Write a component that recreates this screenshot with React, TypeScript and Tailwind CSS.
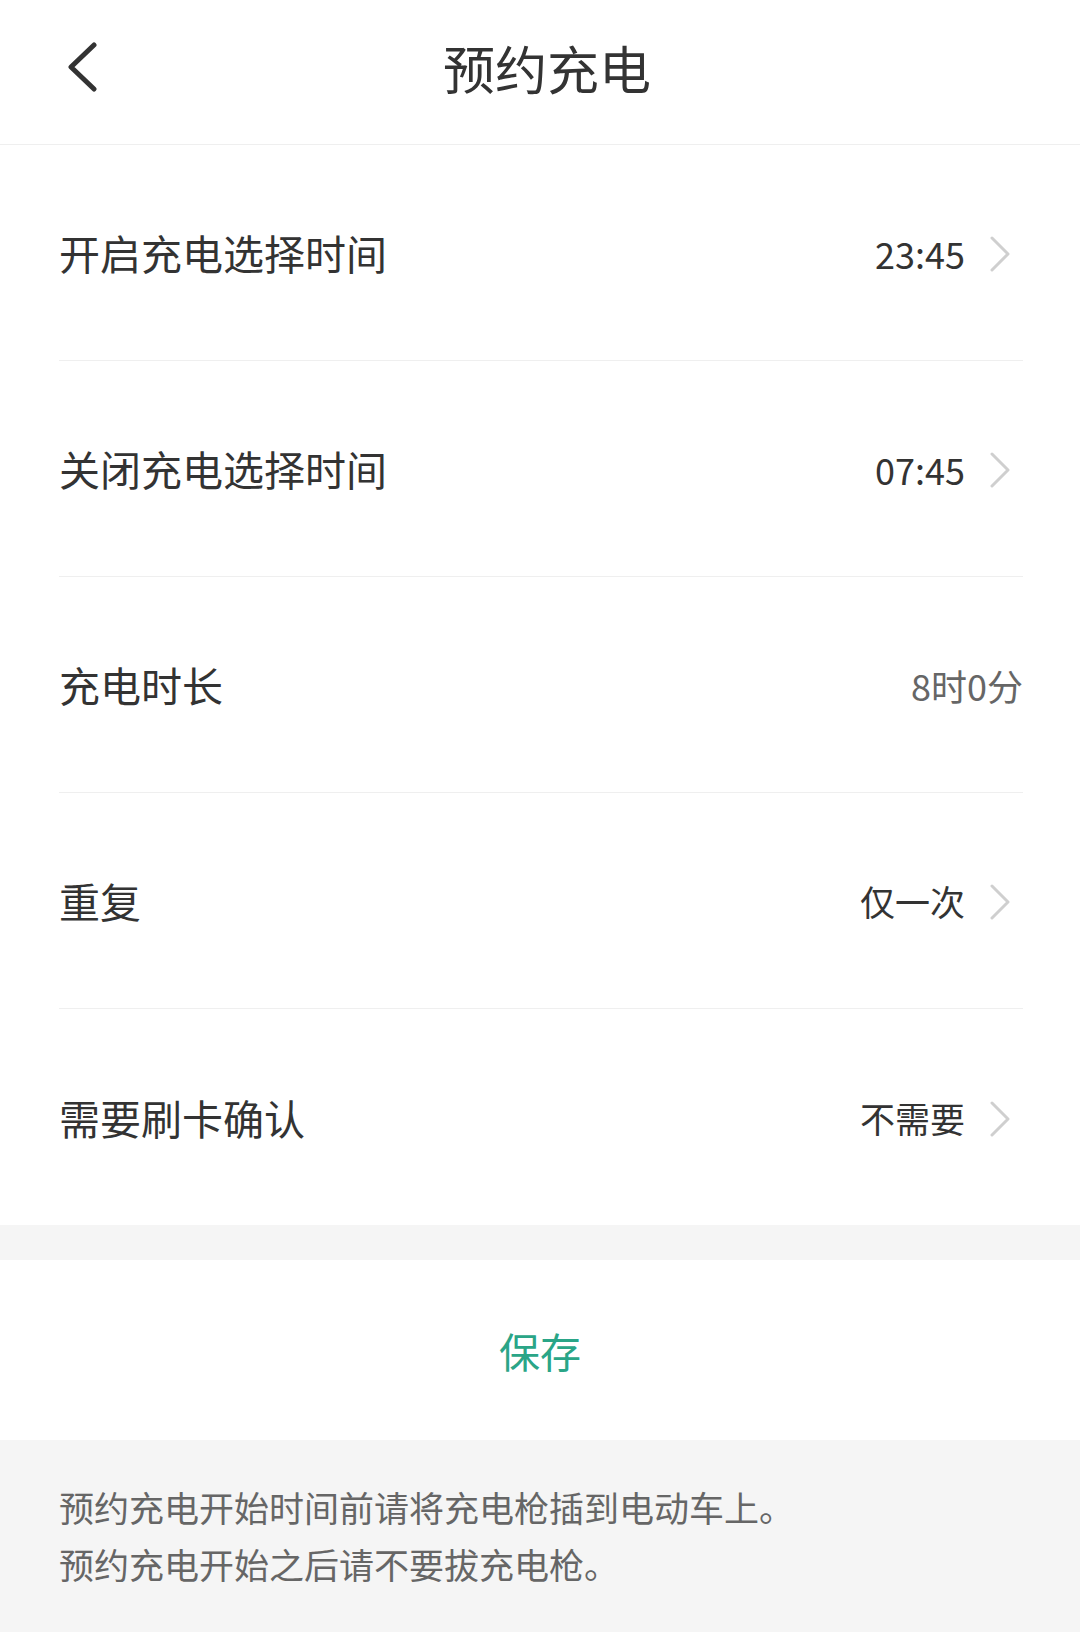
import React from "react";

const font = { fontFamily: '"Noto Sans CJK SC", "Noto Sans", sans-serif' };

function Chevron() {
  return (
    <svg width="20" height="36" viewBox="0 0 20 36" className="ml-[25px] mr-[13px] mt-[3px] shrink-0">
      <path d="M2 2 L18 18 L2 34" fill="none" stroke="#cfcfcf" strokeWidth="3" strokeLinecap="round" strokeLinejoin="round" />
    </svg>
  );
}

type Row = { label: string; value: string; arrow: boolean; muted?: boolean; cjk?: boolean };

const rows: Row[] = [
  { label: "开启充电选择时间", value: "23:45", arrow: true },
  { label: "关闭充电选择时间", value: "07:45", arrow: true },
  { label: "充电时长", value: "8时0分", arrow: false, muted: true },
  { label: "重复", value: "仅一次", arrow: true, cjk: true },
  { label: "需要刷卡确认", value: "不需要", arrow: true, cjk: true },
];

export default function App() {
  return (
    <div className="w-[1080px] h-[1632px] bg-white flex flex-col overflow-hidden" style={font}>
      {/* header */}
      <div className="h-[145px] shrink-0 grid grid-cols-[1fr_auto_1fr] items-center pb-[8px] border-b border-[#efefef]">
        <div className="pl-[66px] flex items-center">
          <svg width="34" height="52" viewBox="0 0 34 52">
            <path d="M28 3 L5 25 L28 47" fill="none" stroke="#333333" strokeWidth="5" strokeLinecap="round" strokeLinejoin="round" />
          </svg>
        </div>
        <div className="text-[52px] leading-none text-[#333333] pl-[14px]">预约充电</div>
        <div />
      </div>

      {/* rows */}
      <div className="pl-[59px] pr-[57px] shrink-0">
        {rows.map((r, i) => (
          <div
            key={r.label}
            className={
              "h-[216px] flex items-center justify-between " +
              (i < rows.length - 1 ? "border-b border-[#efefef]" : "")
            }
          >
            <div className="text-[41px] leading-none text-[#333333]">{r.label}</div>
            <div className="flex items-center">
              <div
                className={
                  (r.cjk ? "text-[35px] " : "text-[36px] ") +
                  "leading-none " +
                  (r.muted ? "text-[#666666]" : "text-[#333333]")
                }
              >
                {r.value}
              </div>
              {r.arrow && <Chevron />}
            </div>
          </div>
        ))}
      </div>

      <div className="h-[35px] shrink-0 bg-[#f5f5f5]" />

      <div className="h-[180px] shrink-0 flex items-center justify-center">
        <div className="text-[41px] leading-none text-[#2aa587]">保存</div>
      </div>

      <div className="flex-1 bg-[#f5f5f5] pl-[59px] pt-[38px]">
        <p className="text-[35px] leading-[57px] text-[#666666]">预约充电开始时间前请将充电枪插到电动车上。</p>
        <p className="text-[35px] leading-[57px] text-[#666666]">预约充电开始之后请不要拔充电枪。</p>
      </div>
    </div>
  );
}
